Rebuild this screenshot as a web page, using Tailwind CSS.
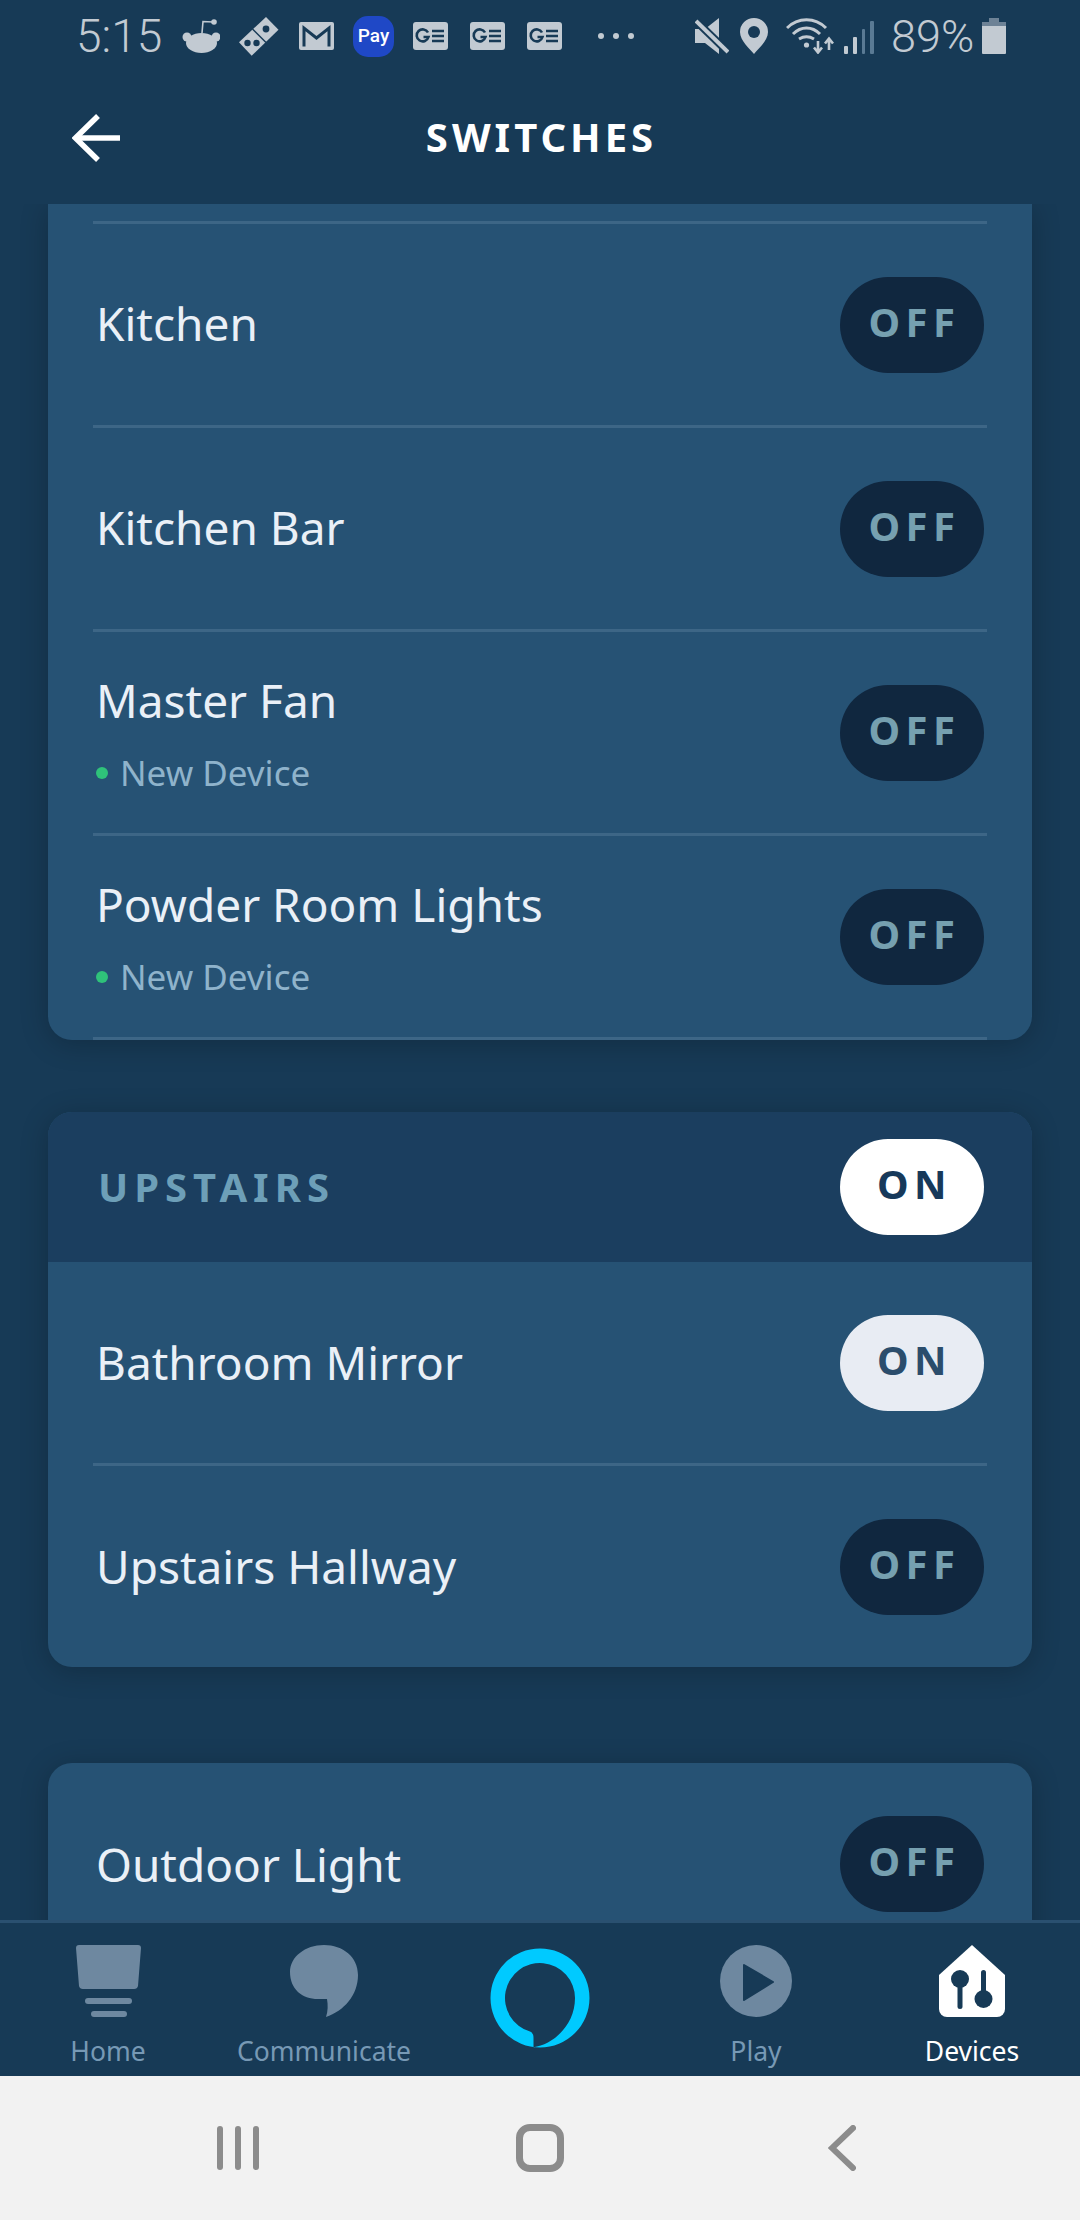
<!doctype html>
<html lang="en">
<head>
  <meta charset="utf-8">
  <title>Switches</title>
  <script src="https://cdn.jsdelivr.net/npm/@tailwindcss/browser@4"></script>
</head>
<body class="m-0 w-[1080px] h-[2220px] overflow-hidden bg-[#173a56] font-['Noto_Sans',sans-serif]">

<div class="flex flex-col h-[2220px]">

  <!-- status bar -->
  <div class="relative h-[70px] bg-[#173a56] text-[#c2cad2] shrink-0">
    <div class="flex items-center h-[72px] pl-[76px]">
      <span class="font-['Roboto'] font-light text-[46px] leading-none w-[106px]">5:15</span>
      <!-- reddit -->
      <svg class="w-[38px] h-[34px] mt-[0px]" viewBox="0 0 38 34" fill="#c2cad2"><ellipse cx="19.500" cy="24" rx="15.500" ry="10"/><circle cx="5" cy="18" r="4.500"/><circle cx="34" cy="18" r="4.500"/><circle cx="32" cy="3" r="2.800"/><path d="M20 14 L21 2.500 L31 3" fill="none" stroke="#c2cad2" stroke-width="1.600"/></svg>
      <!-- dominos -->
      <svg class="w-[40px] h-[39px] ml-[19px]" viewBox="0 0 40 39"><path d="M27 0 L39.500 12.700 L12.700 38.700 L0 25.300 Z" fill="#c2cad2"/><path d="M13.500 12 L27 25.500" stroke="#173a56" stroke-width="1.500"/><circle cx="27" cy="12" r="3.400" fill="#173a56"/><circle cx="8.500" cy="26" r="3.200" fill="#173a56"/><circle cx="17.500" cy="26" r="3.200" fill="#173a56"/></svg>
      <!-- gmail -->
      <svg class="w-[35px] h-[28px] ml-[20px]" viewBox="0 0 35 28"><rect width="35" height="28" rx="2" fill="#c2cad2"/><path d="M5 24.500 V6 L17.500 16 L30 6 V24.500" fill="none" stroke="#173a56" stroke-width="3"/></svg>
      <!-- samsung pay -->
      <div class="flex items-center justify-center w-[41px] h-[41px] ml-[19px] rounded-[15px] bg-[#1f48c6] text-white text-[19px] font-['Roboto'] font-medium">Pay</div>
      <!-- google news x3 -->
      <svg class="w-[35px] h-[28px] ml-[19px]" viewBox="0 0 35 28"><rect width="35" height="28" rx="3" fill="#c2cad2"/><path d="M15 10.500 A6 6 0 1 0 15.500 15 H10.500" fill="none" stroke="#173a56" stroke-width="2.600"/><path d="M19 9 H31 M19 14 H31 M19 19 H31" stroke="#173a56" stroke-width="2.600"/></svg>
      <svg class="w-[35px] h-[28px] ml-[22px]" viewBox="0 0 35 28"><rect width="35" height="28" rx="3" fill="#c2cad2"/><path d="M15 10.500 A6 6 0 1 0 15.500 15 H10.500" fill="none" stroke="#173a56" stroke-width="2.600"/><path d="M19 9 H31 M19 14 H31 M19 19 H31" stroke="#173a56" stroke-width="2.600"/></svg>
      <svg class="w-[35px] h-[28px] ml-[22px]" viewBox="0 0 35 28"><rect width="35" height="28" rx="3" fill="#c2cad2"/><path d="M15 10.500 A6 6 0 1 0 15.500 15 H10.500" fill="none" stroke="#173a56" stroke-width="2.600"/><path d="M19 9 H31 M19 14 H31 M19 19 H31" stroke="#173a56" stroke-width="2.600"/></svg>
      <!-- overflow dots -->
      <svg class="w-[36px] h-[8px] ml-[36px]" viewBox="0 0 36 8" fill="#c2cad2"><circle cx="3" cy="4" r="3"/><circle cx="18" cy="4" r="3"/><circle cx="33" cy="4" r="3"/></svg>
      <!-- mute -->
      <svg class="w-[34px] h-[36px] ml-[61px]" viewBox="0 0 34 36" fill="#c2cad2"><path d="M0 11 H10 L24 0 V36 L10 25 H0 Z"/><path d="M1 3 L33 34" stroke="#173a56" stroke-width="8"/><path d="M1 3 L33 34" stroke="#c2cad2" stroke-width="4"/></svg>
      <!-- location -->
      <svg class="w-[28px] h-[36px] ml-[11px]" viewBox="0 0 28 36"><path d="M14 0 A14 14 0 0 1 28 14 C28 23 18 31 14 36 C10 31 0 23 0 14 A14 14 0 0 1 14 0 Z" fill="#c2cad2"/><circle cx="14" cy="14" r="6" fill="#173a56"/></svg>
      <!-- wifi -->
      <svg class="w-[48px] h-[36px] ml-[18px]" viewBox="0 0 48 36" fill="none" stroke="#c2cad2" stroke-width="3"><path d="M1 10 C12 -1 29 -1 40 10"/><path d="M7 16 C15 8 26 8 34 16"/><path d="M13 21 C18 18 23 18 28 21"/><circle cx="20.500" cy="27" r="2.600" fill="#c2cad2" stroke="none"/><path d="M32 23 V34 M28 29.500 L32 34.500 L36 29.500" stroke-width="2.600"/><path d="M43 32 V21 M39 25.500 L43 20.500 L47 25.500" stroke-width="2.600"/></svg>
      <!-- signal -->
      <div class="flex items-end gap-[5px] w-[30px] h-[33px] ml-[10px] mt-[2px]">
        <div class="w-[4px] h-[8px] rounded-[1px] bg-[#c2cad2]"></div>
        <div class="w-[4px] h-[17px] rounded-[1px] bg-[#c2cad2]"></div>
        <div class="w-[4px] h-[25px] rounded-[1px] bg-[#5a7a94]"></div>
        <div class="w-[4px] h-[33px] rounded-[1px] bg-[#5a7a94]"></div>
      </div>
      <span class="font-['Roboto'] font-light text-[45px] leading-none ml-[17px] w-[91px]">89%</span>
      <!-- battery -->
      <svg class="w-[24px] h-[36px]" viewBox="0 0 24 36"><path d="M7 0 H17 V4 H24 V8 H0 V4 H7 Z" fill="#6d8296"/><path d="M0 8 H24 V35 A1 1 0 0 1 23 36 H1 A1 1 0 0 1 0 35 Z" fill="#c2cad2"/></svg>
    </div>
  </div>

  <!-- header -->
  <div class="relative flex items-center justify-center h-[134px] bg-[#173a56] shrink-0">
    <svg class="absolute left-[72px] top-[44px] w-[48px] h-[48px]" viewBox="0 0 48 48" fill="none" stroke="#fff" stroke-width="5.500"><path d="M26 2 L3.500 24 L26 46"/><path d="M4 24 H48"/></svg>
    <h1 class="pl-[3px] font-bold text-white text-[40px] tracking-[4px] leading-none">SWITCHES</h1>
  </div>

  <!-- list -->
  <div class="flex-1 overflow-hidden bg-[#173a56] px-[48px]">

    <div class="bg-[#265274] rounded-b-[24px] shadow-[0_4px_28px_rgba(0,0,0,0.22)]">
      <div class="mx-[45px] h-[20px] border-b-[3px] border-[#3d6686]"></div>

      <div class="flex items-center justify-between mx-[45px] h-[204px] border-b-[3px] border-[#3d6686]">
        <span class="pl-[3px] pb-[2px] text-[46px] text-[#eaf0f7]">Kitchen</span>
        <div class="flex items-center justify-center w-[144px] h-[96px] mr-[3px] rounded-full bg-[#10273f] pb-[6px] pl-[5px] text-[40px] font-bold tracking-[5.500px] text-[#76a0b0]">OFF</div>
      </div>
      <div class="flex items-center justify-between mx-[45px] h-[204px] border-b-[3px] border-[#3d6686]">
        <span class="pl-[3px] pb-[2px] text-[46px] text-[#eaf0f7]">Kitchen Bar</span>
        <div class="flex items-center justify-center w-[144px] h-[96px] mr-[3px] rounded-full bg-[#10273f] pb-[6px] pl-[5px] text-[40px] font-bold tracking-[5.500px] text-[#76a0b0]">OFF</div>
      </div>
      <div class="flex items-center justify-between mx-[45px] h-[204px] border-b-[3px] border-[#3d6686]">
        <div class="pl-[3px]">
          <div class="text-[46px] leading-[60px] text-[#eaf0f7]">Master Fan</div>
          <div class="flex items-center gap-[12px] mt-[20px] text-[35px] leading-[46px] text-[#8fb3cb]"><span class="w-[12px] h-[12px] rounded-full bg-[#2fc27a]"></span>New Device</div>
        </div>
        <div class="flex items-center justify-center w-[144px] h-[96px] mr-[3px] rounded-full bg-[#10273f] pb-[6px] pl-[5px] text-[40px] font-bold tracking-[5.500px] text-[#76a0b0]">OFF</div>
      </div>
      <div class="flex items-center justify-between mx-[45px] h-[204px] border-b-[3px] border-[#3d6686]">
        <div class="pl-[3px]">
          <div class="text-[46px] leading-[60px] text-[#eaf0f7]">Powder Room Lights</div>
          <div class="flex items-center gap-[12px] mt-[20px] text-[35px] leading-[46px] text-[#8fb3cb]"><span class="w-[12px] h-[12px] rounded-full bg-[#2fc27a]"></span>New Device</div>
        </div>
        <div class="flex items-center justify-center w-[144px] h-[96px] mr-[3px] rounded-full bg-[#10273f] pb-[6px] pl-[5px] text-[40px] font-bold tracking-[5.500px] text-[#76a0b0]">OFF</div>
      </div>
    </div>

    <div class="mt-[72px] bg-[#265274] rounded-[24px] shadow-[0_4px_28px_rgba(0,0,0,0.22)] overflow-hidden">
      <div class="flex items-center justify-between h-[150px] pl-[50px] pr-[48px] bg-[#1b3e5f]">
        <span class="text-[40px] font-bold tracking-[6px] text-[#6d9fb8]">UPSTAIRS</span>
        <div class="flex items-center justify-center w-[144px] h-[96px] rounded-full bg-white pb-[6px] pl-[5px] text-[40px] font-bold tracking-[5.500px] text-[#17395a]">ON</div>
      </div>
      <div class="flex items-center justify-between mx-[45px] h-[204px] border-b-[3px] border-[#3d6686]">
        <span class="pl-[3px] text-[46px] text-[#eaf0f7]">Bathroom Mirror</span>
        <div class="flex items-center justify-center w-[144px] h-[96px] mr-[3px] rounded-full bg-[#e8ecf3] pb-[6px] pl-[5px] text-[40px] font-bold tracking-[5.500px] text-[#2b4d6c]">ON</div>
      </div>
      <div class="flex items-center justify-between mx-[45px] h-[201px]">
        <span class="pl-[3px] text-[46px] text-[#eaf0f7]">Upstairs Hallway</span>
        <div class="flex items-center justify-center w-[144px] h-[96px] mr-[3px] rounded-full bg-[#10273f] pb-[6px] pl-[5px] text-[40px] font-bold tracking-[5.500px] text-[#76a0b0]">OFF</div>
      </div>
    </div>

    <div class="mt-[96px] bg-[#265274] rounded-t-[24px] shadow-[0_4px_28px_rgba(0,0,0,0.22)]">
      <div class="flex items-center justify-between mx-[45px] h-[202px]">
        <span class="pl-[3px] text-[46px] text-[#eaf0f7]">Outdoor Light</span>
        <div class="flex items-center justify-center w-[144px] h-[96px] mr-[3px] rounded-full bg-[#10273f] pb-[6px] pl-[5px] text-[40px] font-bold tracking-[5.500px] text-[#76a0b0]">OFF</div>
      </div>
    </div>
  </div>

  <!-- bottom nav -->
  <div class="grid grid-cols-5 h-[156px] shrink-0 border-t-[3px] border-[#2a5070] bg-[#173a56] relative text-[26.500px] text-[#7799b5]">
    <div class="flex flex-col items-center pt-[22px]">
      <svg class="w-[65px] h-[72px]" viewBox="0 0 65 72" fill="#6e88a0"><path d="M3 0 H62 A3 3 0 0 1 65 3 L62 41 A4 4 0 0 1 58 44 H7 A4 4 0 0 1 3 41 L0 3 A3 3 0 0 1 3 0 Z"/><rect x="9" y="53" width="47" height="6" rx="3"/><rect x="15" y="66" width="36" height="6" rx="3"/></svg>
      <span class="mt-[16px] leading-[36px]">Home</span>
    </div>
    <div class="flex flex-col items-center pt-[22px]">
      <svg class="w-[68px] h-[72px]" viewBox="0 0 68 72" fill="#6e88a0"><path d="M34 0 C53 0 68 12 68 30 C68 50 54 66 36 72 C38 66 38 60 37 54 H28 C12 54 0 44 0 27 C0 12 15 0 34 0 Z"/></svg>
      <span class="mt-[16px] leading-[36px]">Communicate</span>
    </div>
    <div class="flex flex-col items-center pt-[25px]">
      <svg class="w-[100px] h-[100px]" viewBox="0 0 100 100"><path fill-rule="evenodd" fill="#00caff" d="M50 0.500 A49.500 49.500 0 1 1 50 99.500 A49.500 49.500 0 1 1 50 0.500 Z M43.500 99.200 C62 97 85 78 85 50 A35 35 0 1 0 40 83.600 C43 85 43.500 87 43.500 90 Z"/></svg>
    </div>
    <div class="flex flex-col items-center pt-[22px]">
      <svg class="w-[72px] h-[72px]" viewBox="0 0 72 72"><circle cx="36" cy="36" r="36" fill="#6e88a0"/><path d="M24 20 L53 37 L24 55 Z" fill="#173a56" stroke="#173a56" stroke-width="2" stroke-linejoin="round"/></svg>
      <span class="mt-[16px] leading-[36px]">Play</span>
    </div>
    <div class="flex flex-col items-center pt-[22px] text-white">
      <svg class="w-[66px] h-[72px]" viewBox="0 0 66 72"><path d="M33 0 L66 30 V64 A8 8 0 0 1 58 72 H8 A8 8 0 0 1 0 64 V30 Z" fill="#fff"/><circle cx="21" cy="34" r="9" fill="#173a56"/><rect x="18.500" y="34" width="5" height="30" rx="2.500" fill="#173a56"/><circle cx="44.500" cy="54" r="9" fill="#173a56"/><rect x="42" y="25" width="5" height="30" rx="2.500" fill="#173a56"/></svg>
      <span class="mt-[16px] leading-[36px]">Devices</span>
    </div>
  </div>

  <!-- android nav -->
  <div class="flex items-center justify-center h-[144px] shrink-0 bg-[#f2f2f2]">
    <div class="grid grid-cols-3 w-[906px] items-center justify-items-center">
      <div class="flex gap-[12px]">
        <div class="w-[6px] h-[44px] rounded-full bg-[#8c8c8c]"></div>
        <div class="w-[6px] h-[44px] rounded-full bg-[#8c8c8c]"></div>
        <div class="w-[6px] h-[44px] rounded-full bg-[#8c8c8c]"></div>
      </div>
      <div class="w-[48px] h-[48px] rounded-[14px] border-[7px] border-[#8c8c8c]"></div>
      <svg class="w-[28px] h-[46px]" viewBox="0 0 28 46" fill="none" stroke="#8c8c8c" stroke-width="6" stroke-linecap="round"><path d="M25 3 L4 23 L25 43"/></svg>
    </div>
  </div>
</div>

</body>
</html>
